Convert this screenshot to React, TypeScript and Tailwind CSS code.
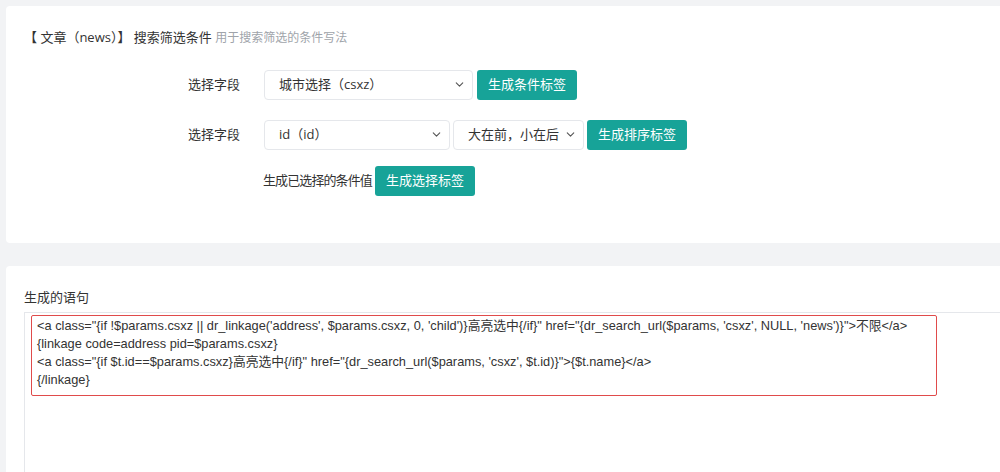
import { ChevronDown } from "lucide-react";

const font = { fontFamily: '"Open Sans", "Noto Sans CJK SC", sans-serif' };

function Select({ text, w }: { text: string; w: string }) {
  return (
    <div className={`flex h-[30px] items-center justify-between rounded border border-[#e5e7eb] bg-white pl-[14px] pr-[6px] text-[13px] text-[#333] ${w}`}>
      <span>{text}</span>
      <ChevronDown size={13} strokeWidth={2} className="text-[#555]" />
    </div>
  );
}

function Btn({ children }: { children: string }) {
  return (
    <button className="h-[30px] rounded-[3px] bg-[#17a398] px-[11px] text-[13px] text-white">{children}</button>
  );
}

export default function App() {
  return (
    <div style={font} className="h-[472px] overflow-hidden bg-[#f2f3f5] pl-[6px] pt-[6px]">
      <div className="h-[237px] rounded-l bg-white pl-[18px] pt-[22px]">
        <div className="text-[13px] text-[#333]">
          【 文章（news）】 搜索筛选条件 <span className="text-[12px] text-[#a0a4aa]">用于搜索筛选的条件写法</span>
        </div>
        <div className="mt-[22px] flex flex-col gap-[20px] text-[13px] text-[#333]">
          <div className="flex items-center">
            <span className="ml-[164px] w-[76px]">选择字段</span>
            <Select text="城市选择（csxz）" w="w-[209px]" />
            <span className="ml-[4px]"><Btn>生成条件标签</Btn></span>
          </div>
          <div className="flex items-center">
            <span className="ml-[164px] w-[76px]">选择字段</span>
            <Select text="id（id）" w="w-[186px]" />
            <span className="ml-[3px]"><Select text="大在前，小在后" w="w-[131px]" /></span>
            <span className="ml-[3px]"><Btn>生成排序标签</Btn></span>
          </div>
          <div className="-mt-[4px] flex items-center">
            <span className="ml-[239px] tracking-[-0.9px]">生成已选择的条件值</span>
            <span className="ml-[3px]"><Btn>生成选择标签</Btn></span>
          </div>
        </div>
      </div>
      <div className="mt-[23px] h-[300px] rounded-l bg-white pl-[18px] pt-[22px]">
        <div className="text-[13px] text-[#333]">生成的语句</div>
        <div className="mt-[4px] h-[200px] border-l border-t border-[#e5e7eb] pl-[6px] pt-[2px]">
          <div className="w-[906px] rounded-[2px] border border-[#e04b4b] px-[5px] pb-[6px] pt-[1px] text-[12.8px] leading-[18px] text-[#333]" style={{ fontFamily: '"Liberation Sans", "Noto Sans CJK SC", sans-serif' }}>
            <div>{`<a class="{if !$params.csxz || dr_linkage('address', $params.csxz, 0, 'child')}高亮选中{/if}" href="{dr_search_url($params, 'csxz', NULL, 'news')}">不限</a>`}</div>
            <div>{`{linkage code=address pid=$params.csxz}`}</div>
            <div>{`<a class="{if $t.id==$params.csxz}高亮选中{/if}" href="{dr_search_url($params, 'csxz', $t.id)}">{$t.name}</a>`}</div>
            <div>{`{/linkage}`}</div>
          </div>
        </div>
      </div>
    </div>
  );
}
